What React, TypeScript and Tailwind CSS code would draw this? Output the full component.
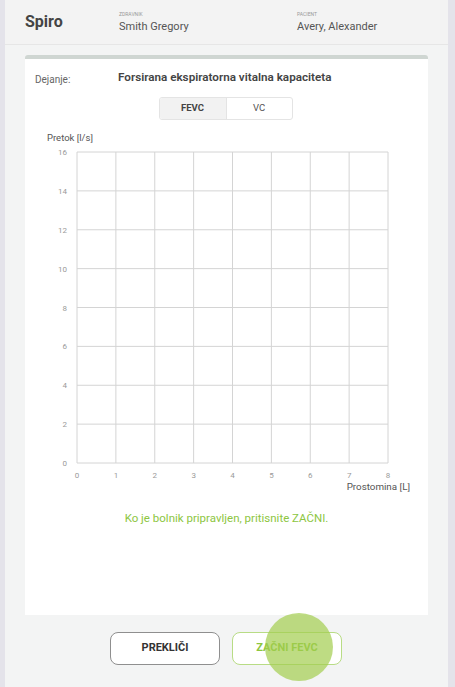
import React from 'react';

const ticks = [0, 1, 2, 3, 4, 5, 6, 7, 8];

// plot box in page coordinates
const X0 = 77;
const Y0 = 152;
const SIZE = 311;
const STEP = SIZE / 8;

function FlowChart() {
  return (
    <svg
      width={402}
      height={365}
      viewBox="25 130 402 365"
      className="block"
      style={{ fontFamily: 'Roboto, "Liberation Sans", sans-serif' }}
    >
      <text x={47} y={141} fontSize={9.5} fill="#555">
        Pretok [l/s]
      </text>
      {ticks.map((t) => (
        <line
          key={'v' + t}
          x1={X0 + t * STEP}
          x2={X0 + t * STEP}
          y1={Y0}
          y2={Y0 + SIZE}
          stroke="#d4d4d4"
          strokeWidth={1}
        />
      ))}
      {ticks.map((t) => (
        <line
          key={'h' + t}
          x1={X0}
          x2={X0 + SIZE}
          y1={Y0 + t * STEP}
          y2={Y0 + t * STEP}
          stroke="#d4d4d4"
          strokeWidth={1}
        />
      ))}
      {ticks.map((t) => (
        <text
          key={'yl' + t}
          x={67}
          y={Y0 + SIZE - t * STEP + 3}
          fontSize={8}
          fill="#9a9a9a"
          textAnchor="end"
        >
          {t * 2}
        </text>
      ))}
      {ticks.map((t) => (
        <text
          key={'xl' + t}
          x={X0 + t * STEP}
          y={478}
          fontSize={8}
          fill="#9a9a9a"
          textAnchor="middle"
        >
          {t}
        </text>
      ))}
      <text x={410} y={490} fontSize={9.8} fill="#555" textAnchor="end">
        Prostomina [L]
      </text>
    </svg>
  );
}

export default function App() {
  return (
    <div
      className="flex h-[687px] w-[455px] overflow-hidden bg-[#e4e3ea] text-[#333]"
      style={{ fontFamily: 'Roboto, "Liberation Sans", sans-serif' }}
    >
      <div className="ml-[5px] mr-[7px] flex flex-1 flex-col bg-[#f3f4f4]">
        {/* header */}
        <div className="flex h-[45px] items-center border-b border-[#e6e6e6] bg-[#f3f3f3] pl-[20px]">
          <div className="w-[94px] text-[16px] font-bold text-[#444]">Spiro</div>
          <div className="flex w-[178px] flex-col">
            <span className="text-[5px] uppercase leading-[6px] text-[#999]">Zdravnik</span>
            <span className="mt-[3px] text-[11px] leading-[13px] text-[#555]">Smith Gregory</span>
          </div>
          <div className="flex flex-col">
            <span className="text-[5px] uppercase leading-[6px] text-[#999]">Pacient</span>
            <span className="mt-[3px] text-[11px] leading-[13px] text-[#555]">Avery, Alexander</span>
          </div>
        </div>

        {/* card */}
        <div className="mx-[20px] mt-[10px] flex h-[560px] flex-col rounded-t-[3px] border-t-[4px] border-[#cfd6d2] bg-white">
          <div className="flex h-[28px] items-end pl-[10px]">
            <span className="w-[83px] text-[10px] text-[#666]">Dejanje:</span>
            <span className="text-[11.7px] font-semibold text-[#444]">
              Forsirana ekspiratorna vitalna kapaciteta
            </span>
          </div>
          <div className="mt-[10px] flex justify-center pr-[2px]">
            <div className="flex h-[23px] overflow-hidden rounded-[3px] border border-[#e4e4e4] text-[9.5px]">
              <div className="flex w-[66px] items-center justify-center bg-[#f2f2f2] font-bold text-[#444]">
                FEVC
              </div>
              <div className="flex w-[66px] items-center justify-center border-l border-[#e4e4e4] text-[#555]">
                VC
              </div>
            </div>
          </div>
          <div className="mt-[10px]">
            <FlowChart />
          </div>
          <div className="mt-[15px] text-center text-[11.5px] text-[#8dc63f]">
            Ko je bolnik pripravljen, pritisnite ZAČNI.
          </div>
        </div>

        {/* actions */}
        <div className="mt-[17px] flex justify-center gap-[12px] pr-[1px]">
          <button className="h-[33px] w-[110px] rounded-[8px] border-[1.5px] border-[#8f8f8f] bg-white text-[11px] font-bold text-[#333]">
            PREKLIČI
          </button>
          <div className="relative">
            <button className="h-[33px] w-[110px] rounded-[8px] border-[1.5px] border-[#b8dc85] bg-white text-[11px] font-bold text-[#8dc63f]">
              ZAČNI FEVC
            </button>
            <span className="pointer-events-none absolute left-[33px] top-[-19px] h-[68px] w-[68px] rounded-full bg-[#a3cd4e]/70" />
          </div>
        </div>
      </div>
    </div>
  );
}
